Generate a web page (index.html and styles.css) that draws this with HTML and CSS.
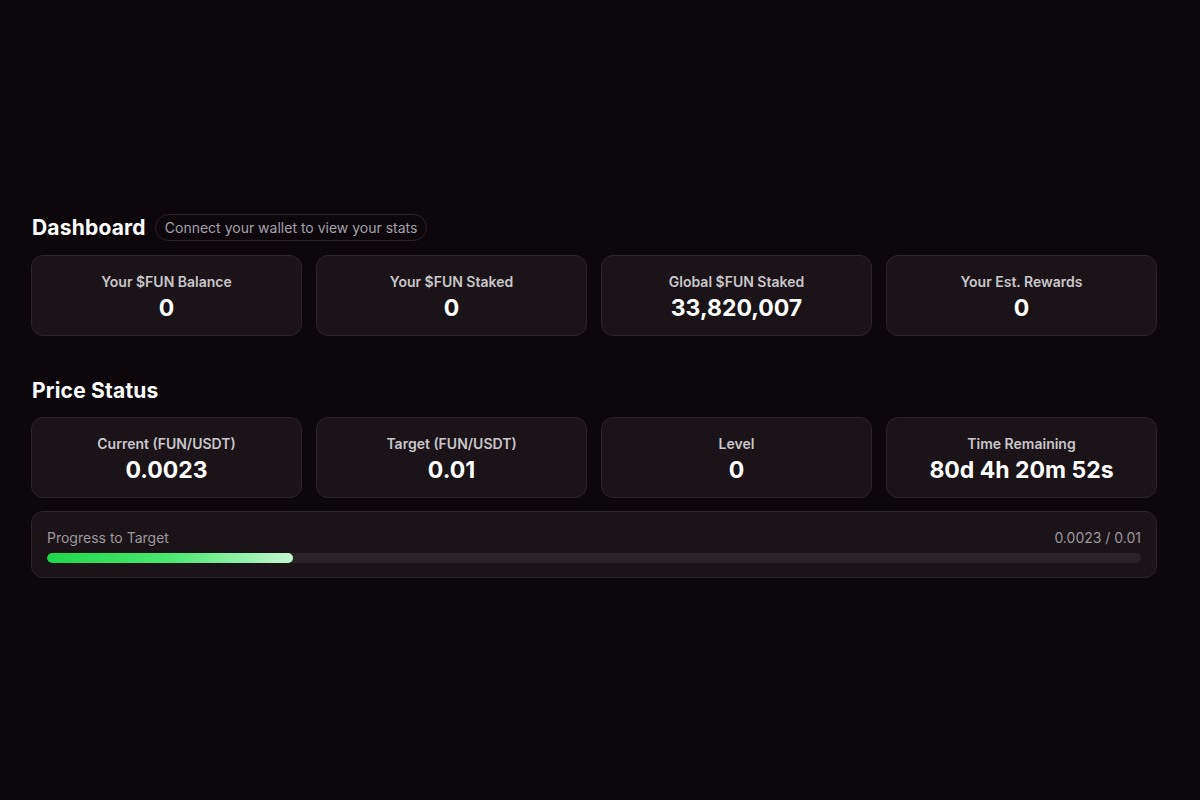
FILE: index.html
```html
<!DOCTYPE html>
<html lang="en">
<head>
<meta charset="utf-8">
<title>Dashboard</title>
<link rel="stylesheet" href="styles.css">
</head>
<body>
<main class="page">
  <section class="section">
    <div class="section-head">
      <h2 class="title">Dashboard</h2>
      <span class="pill">Connect your wallet to view your stats</span>
    </div>
    <div class="grid">
      <div class="card"><div class="label">Your $FUN Balance</div><div class="value">0</div></div>
      <div class="card"><div class="label">Your $FUN Staked</div><div class="value">0</div></div>
      <div class="card"><div class="label">Global $FUN Staked</div><div class="value">33,820,007</div></div>
      <div class="card"><div class="label">Your Est. Rewards</div><div class="value">0</div></div>
    </div>
  </section>
  <section class="section section-price">
    <div class="section-head">
      <h2 class="title">Price Status</h2>
    </div>
    <div class="grid">
      <div class="card"><div class="label">Current (FUN/USDT)</div><div class="value">0.0023</div></div>
      <div class="card"><div class="label">Target (FUN/USDT)</div><div class="value">0.01</div></div>
      <div class="card"><div class="label">Level</div><div class="value">0</div></div>
      <div class="card"><div class="label">Time Remaining</div><div class="value">80d 4h 20m 52s</div></div>
    </div>
    <div class="progress-card">
      <div class="progress-top">
        <span>Progress to Target</span>
        <span>0.0023 / 0.01</span>
      </div>
      <div class="track"><div class="fill" style="width: 22.5%"></div></div>
    </div>
  </section>
</main>
</body>
</html>
```
FILE: styles.css
```css
* { box-sizing: border-box; }
html, body { margin: 0; padding: 0; }
body {
  background: #0c070b;
  color: #ffffff;
  font-family: Inter, "Liberation Sans", Arial, sans-serif;
  width: 1200px;
  height: 800px;
  overflow: hidden;
}
.page {
  width: 1126px;
  margin: 213px 0 0 31px;
}
.section-head {
  display: flex;
  align-items: center;
  gap: 9px;
  height: 28px;
}
.title {
  margin: 0 0 0 1px;
  font-size: 21px;
  font-weight: 700;
  letter-spacing: 0.2px;
  color: #ffffff;
}
.pill {
  display: inline-flex;
  align-items: center;
  height: 27px;
  padding: 0 9px;
  border: 1px solid #2a2227;
  border-radius: 14px;
  font-size: 14px;
  color: #a3a2aa;
}
.grid {
  display: grid;
  grid-template-columns: repeat(4, 1fr);
  gap: 14px;
  margin-top: 14px;
}
.card {
  background: #1a1418;
  border: 1px solid #2b2429;
  border-radius: 12px;
  height: 81px;
  padding: 16px 10px 0;
  text-align: center;
}
.label {
  font-size: 14px;
  line-height: 19px;
  font-weight: 600;
  color: #c9c7ca;
}
.value {
  margin-top: 2px;
  font-size: 23px;
  line-height: 30px;
  font-weight: 700;
  color: #ffffff;
}
.section-price {
  margin-top: 40px;
}
.section-price .grid {
  margin-top: 13px;
}
.progress-card {
  margin-top: 13px;
  background: #1a1418;
  border: 1px solid #2b2429;
  border-radius: 12px;
  height: 67px;
  padding: 16px 15px 0;
}
.progress-top {
  display: flex;
  justify-content: space-between;
  font-size: 14px;
  line-height: 19px;
  color: #9c999c;
}
.track {
  margin-top: 6px;
  height: 10px;
  border-radius: 5px;
  background: #2a2327;
  overflow: hidden;
}
.fill {
  height: 100%;
  border-radius: 5px;
  background: linear-gradient(90deg, #1fd84a 0%, #4ae870 50%, #c4f7d0 100%);
}
```
